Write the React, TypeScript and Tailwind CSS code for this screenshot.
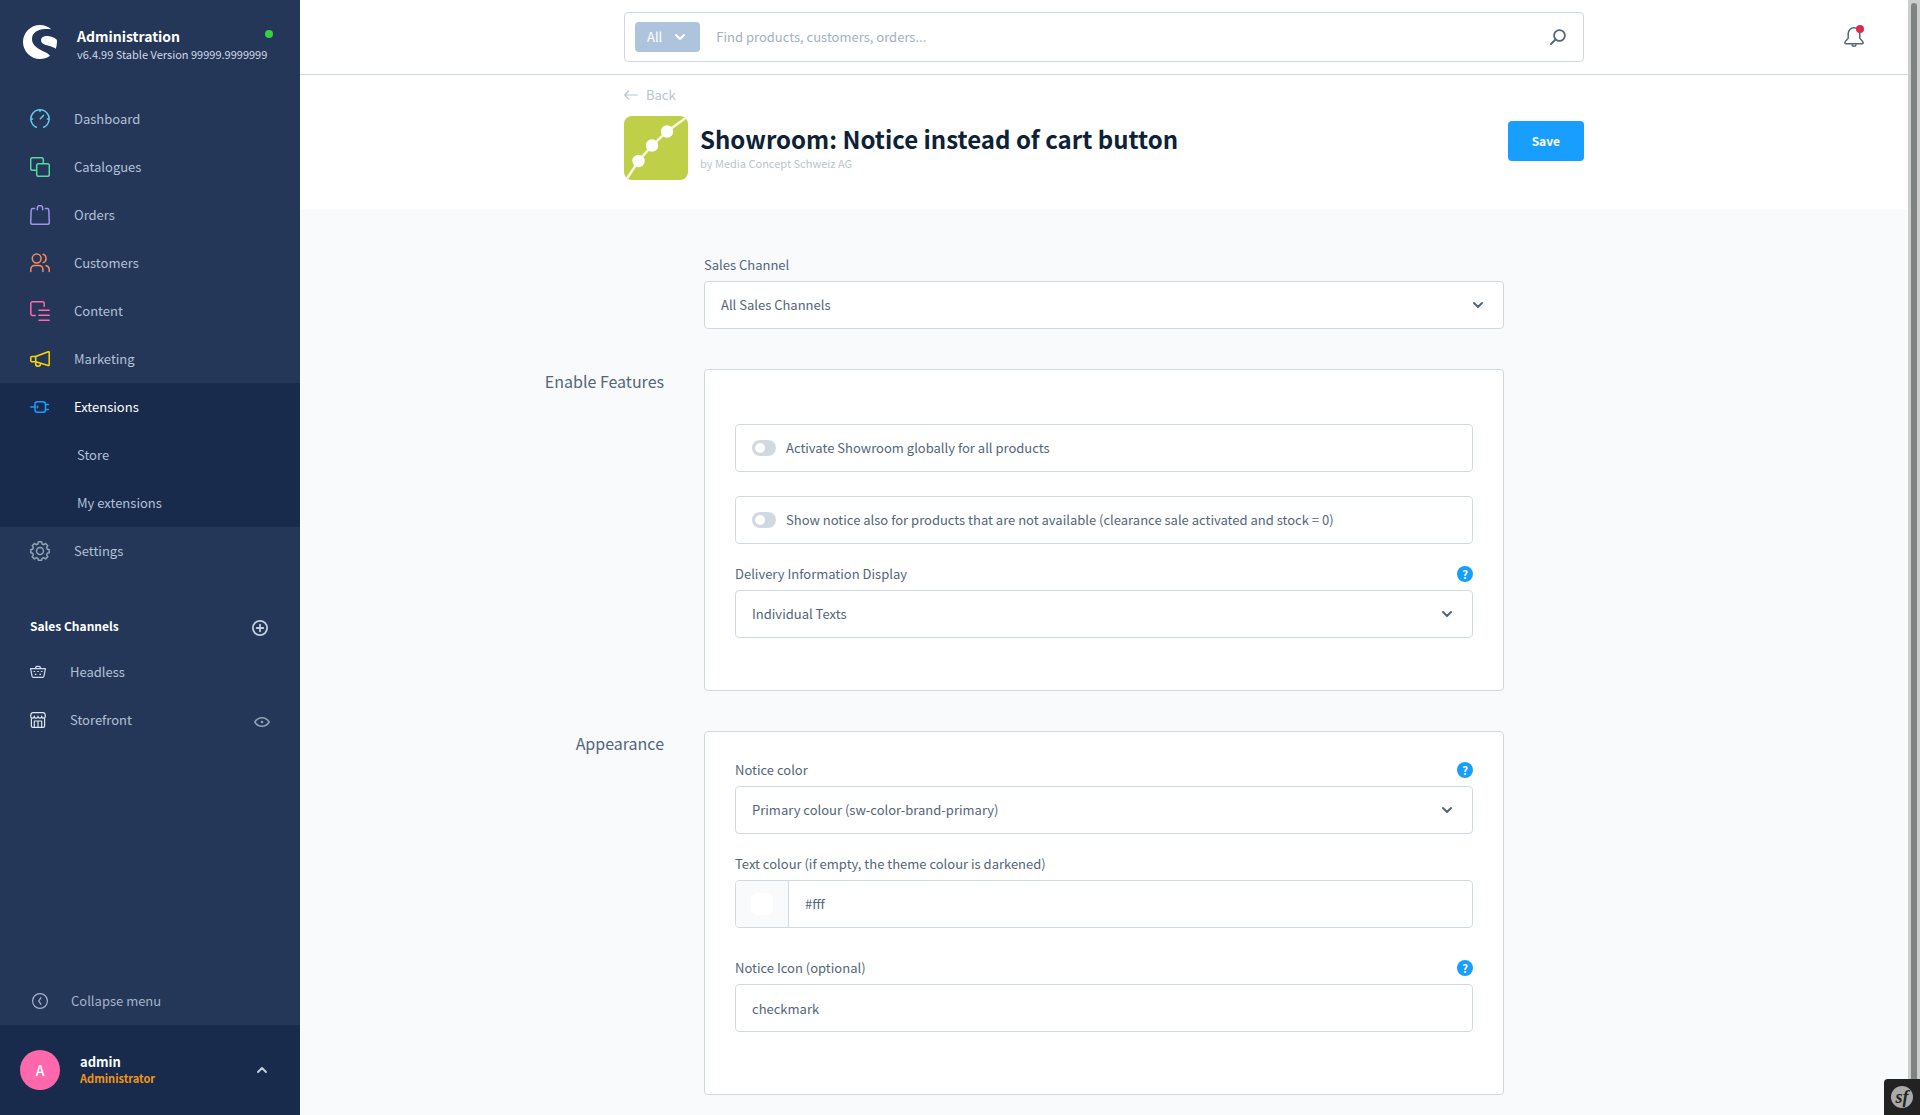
import React, { useState } from 'react';

type IconProps = { className?: string };

const DashboardIcon = () => (
    <svg width="20" height="20" viewBox="0 0 20 20" fill="none" stroke="#65CBE9" strokeWidth="1.5" strokeLinecap="round">
        <path d="M6.3 18.2A9.1 9.1 0 1 1 13.7 18.2" />
        <path d="M10 .9v1.600M.9 10h1.700M19.100 10h-1.700M10.300 9.700l3.200-3.300" />
    </svg>
);

const CataloguesIcon = () => (
    <svg width="20" height="20" viewBox="0 0 20 20" fill="none" stroke="#57D9A3" strokeWidth="1.500">
        <rect x="6.700" y="6.700" width="12.600" height="12.600" rx="1.800" />
        <path d="M6.700 13.300H2.500A1.800 1.800 0 0 1 .7 11.500V2.500A1.800 1.800 0 0 1 2.500.7h9a1.800 1.800 0 0 1 1.800 1.800v4.200" />
    </svg>
);

const OrdersIcon = () => (
    <svg width="20" height="20" viewBox="0 0 20 20" fill="none" stroke="#A092F0" strokeWidth="1.500" strokeLinecap="round">
        <path d="M4.500 3.500H2.700Q1.300 3.500 1.200 5L.7 17.500Q.7 19.300 2.400 19.300h15.200q1.700 0 1.700-1.800L18.800 5q-.1-1.500-1.500-1.500h-1.800" />
        <path d="M7.300 4.700V3.200a2.700 2.700 0 0 1 5.400 0v1.500" />
    </svg>
);

const CustomersIcon = () => (
    <svg width="20" height="20" viewBox="0 0 20 20" fill="none" stroke="#F88962" strokeWidth="1.500" strokeLinecap="round">
        <circle cx="6.700" cy="5.500" r="4.400" />
        <path d="M.8 18.500v-2.300a3.700 3.700 0 0 1 3.700-3.700h4.700a3.700 3.700 0 0 1 3.700 3.700v2.300" />
        <path d="M13.200 1.300a4.400 4.400 0 0 1 0 8.300M16 12.700a3.700 3.700 0 0 1 3.200 3.600v2.200" />
    </svg>
);

const ContentIcon = () => (
    <svg width="20" height="20" viewBox="0 0 20 20" fill="none" stroke="#FF68B4" strokeWidth="1.500" strokeLinecap="round">
        <path d="M5.200 14.400H2.500a1.700 1.700 0 0 1-1.700-1.700V2.500A1.700 1.700 0 0 1 2.500.8h10a1.700 1.700 0 0 1 1.700 1.700v2.700" />
        <path d="M9 9.300h10.200M9 14.200h10.200M9 19.200h10.200" />
    </svg>
);

const MarketingIcon = () => (
    <svg width="20" height="20" viewBox="0 0 20 20" fill="none" stroke="#FFD700" strokeWidth="1.500" strokeLinejoin="round">
        <path d="M5.700 7.500L18.200 2.700q1-.3 1 .7v12.400q0 1-1 .7L5.700 12.700z" />
        <path d="M5.700 7.500H1.800q-1 0-1 1v3.200q0 1 1 1h3.900" />
        <path d="M5.700 13v1.500a2.400 2.400 0 0 0 4.800.6v-.8" />
    </svg>
);

const ExtensionsIcon = () => (
    <svg width="20" height="20" viewBox="0 0 20 20" fill="none" stroke="#189EFF" strokeWidth="1.500" strokeLinecap="round">
        <rect x="5" y="4.800" width="10.500" height="10.500" rx="2.500" />
        <path d="M.8 10H5M15.500 7.500h2.800M15.500 12.500h2.800M7.500 9.200v1.600" />
    </svg>
);

const SettingsIcon = () => (
    <svg width="20" height="20" viewBox="0 0 20 20" fill="none" stroke="#8FA4B5" strokeWidth="1.500" strokeLinejoin="round">
        <circle cx="10" cy="10" r="3.500" />
        <path d="M8.400.8h3.200l.5 2.200 1.600.7 1.900-1.200 2.200 2.200-1.200 1.900.7 1.600 1.900.4v3.200l-1.900.4-.7 1.600 1.200 1.900-2.200 2.200-1.900-1.200-1.600.7-.5 1.800H8.400L7.900 17.400l-1.600-.7-1.900 1.200-2.200-2.200 1.200-1.900-.7-1.600-1.900-.4V8.600l1.900-.4.7-1.600-1.200-1.900 2.200-2.200 1.900 1.200L7.900 3z" />
    </svg>
);

const BasketIcon = () => (
    <svg width="16" height="16" viewBox="0 0 16 16" fill="none" stroke="#D1DBEA" strokeWidth="1.200" strokeLinejoin="round">
        <path d="M.6 4.600h14.800l-1.500 7.700q-.2 1-1.200 1H3.300q-1 0-1.200-1z" />
        <path d="M5.500 4.600q0-2.200 1.500-2.200h2q1.500 0 1.500 2.200" />
        <path d="M3.500 7.500h1.600M7.200 7.500h1.600M10.900 7.500h1.600M4.800 10.400h1.600M9.400 10.400H11" />
    </svg>
);

const StorefrontIcon = () => (
    <svg width="16" height="16" viewBox="0 0 16 16" fill="none" stroke="#E1E7F0" strokeWidth="1.200" strokeLinejoin="round">
        <path d="M1.400 6.200V14q0 1.300 1.300 1.300h10.600q1.300 0 1.300-1.300V6.200" />
        <path d="M.7 4.200Q.7.7 3 .7h10q2.300 0 2.300 3.500 0 2-1.700 2-1.900 0-1.900-2 0 2-1.850 2T8 4.200q0 2-1.850 2T4.300 4.200q0 2-1.900 2-1.700 0-1.700-2z" />
        <path d="M4.300 15.200V9h7.400v6.200M8 9v6.200" />
    </svg>
);

const Chevron = ({ className }: IconProps) => (
    <svg className={className} width="12" height="8" viewBox="0 0 12 8" fill="none" stroke="currentColor" strokeWidth="2" strokeLinecap="round" strokeLinejoin="round">
        <path d="M2 2l4 4 4-4" />
    </svg>
);

const menuTop = [
    { id: 'dashboard', label: 'Dashboard', icon: <DashboardIcon /> },
    { id: 'catalogues', label: 'Catalogues', icon: <CataloguesIcon /> },
    { id: 'orders', label: 'Orders', icon: <OrdersIcon /> },
    { id: 'customers', label: 'Customers', icon: <CustomersIcon /> },
    { id: 'content', label: 'Content', icon: <ContentIcon /> },
    { id: 'marketing', label: 'Marketing', icon: <MarketingIcon /> },
];

const MenuItem = ({ icon, label, active }: { icon: React.ReactNode; label: string; active?: boolean }) => (
    <a href="#" className={`flex h-12 items-center gap-6 px-[30px] ${active ? 'text-white' : 'text-[#B2C1D8]'}`}>
        {icon}
        {label}
    </a>
);

const Sidebar = () => (
    <aside className="flex w-[300px] shrink-0 flex-col bg-[#243758]">
        <div className="flex items-start justify-between py-6 pl-[23px] pr-[27px]">
            <div className="flex items-center gap-5">
                <svg width="34" height="34" viewBox="0 0 34 34" fill="#fff">
                    <path d="M28.300 4.300C25.500 1.600 21.400 0 17 0 7.600 0 0 7.600 0 17s7.600 17 17 17c3.600 0 7.200-1.100 10-3.300-2.300-3-6.600-4.300-10.200-6.300C12.500 22 9 19 9 14 9 8 14.500 4.300 22 4.100c2.200 0 4.300 0 6.300.2z" />
                    <path d="M33.800 14.700C31 12.400 27.200 11 23.500 11.100c-3.200 0-5.400 1.700-5.400 4.100 0 3.400 3.500 4.300 7.400 5.600 2.600.8 5.200 1.700 7.300 3 1-2.900 1.400-6 1-9.100z" />
                </svg>
                <div>
                    <p className="text-[14px] font-bold leading-6 text-white">Administration</p>
                    <p className="whitespace-nowrap text-[11px] leading-3 text-[#D1D9E5]">v6.4.99 Stable Version 99999.9999999</p>
                </div>
            </div>
            <span className="-ml-2 mt-1.5 size-2 shrink-0 rounded-full bg-[#37D046]" />
        </div>

        <nav className="mt-[11px]">
            {menuTop.map((item) => (
                <MenuItem key={item.id} icon={item.icon} label={item.label} />
            ))}
            <div className="bg-[#182B4D]">
                <MenuItem icon={<ExtensionsIcon />} label="Extensions" active />
                <a href="#" className="flex h-12 items-center pl-[77px] text-[#B2C1D8]">Store</a>
                <a href="#" className="flex h-12 items-center pl-[77px] text-[#B2C1D8]">My extensions</a>
            </div>
            <MenuItem icon={<SettingsIcon />} label="Settings" />
        </nav>

        <div className="mt-[29px] flex h-11 items-center justify-between pl-[30px] pr-8">
            <h2 className="text-[12px] font-bold text-white">Sales Channels</h2>
            <button type="button" aria-label="Add sales channel" className="pt-1">
                <svg width="16" height="16" viewBox="0 0 16 16" fill="none" stroke="#C2CEE0" strokeWidth="1.800" strokeLinecap="round">
                    <circle cx="8" cy="8" r="7.100" />
                    <path d="M8 4.700v6.600M4.700 8h6.600" />
                </svg>
            </button>
        </div>
        <a href="#" className="flex h-12 items-center gap-6 px-[30px] text-[#B2C1D8]">
            <BasketIcon />
            Headless
        </a>
        <div className="flex h-12 items-center justify-between pl-[30px] pr-[30px] text-[#B2C1D8]">
            <a href="#" className="flex items-center gap-6">
                <StorefrontIcon />
                Storefront
            </a>
            <button type="button" aria-label="Open storefront" className="pt-1">
                <svg width="16" height="16" viewBox="0 0 16 16" fill="none" stroke="#8FA4B5" strokeWidth="1.500">
                    <path d="M.8 8Q3.500 3.700 8 3.700T15.200 8Q12.500 12.300 8 12.300T.8 8z" />
                    <circle cx="8" cy="8" r="1.300" fill="#8FA4B5" stroke="none" />
                </svg>
            </button>
        </div>

        <button type="button" className="mt-auto flex h-12 items-center gap-[23px] px-8 text-[#A5B4CC]">
            <svg width="16" height="16" viewBox="0 0 16 16" fill="none" stroke="currentColor" strokeLinecap="round" strokeLinejoin="round">
                <circle cx="8" cy="8" r="7.400" strokeWidth="1.200" />
                <path d="M8.800 4.800L6.700 8l2.100 3.200" strokeWidth="1.300" />
            </svg>
            Collapse menu
        </button>
        <button type="button" className="flex h-[90px] items-center bg-[#182B4D] pl-5 pr-8 text-left">
            <span className="flex size-10 items-center justify-center rounded-full bg-[#FF68AC] text-[14px] font-medium text-white">A</span>
            <span className="ml-5 flex flex-1 flex-col font-bold leading-[17px]">
                <span className="text-white">admin</span>
                <span className="text-[11px] text-[#F19612]">Administrator</span>
            </span>
            <Chevron className="rotate-180 text-[#C2CEE0]" />
        </button>
    </aside>
);

const TopBar = () => (
    <header className="grid grid-cols-[1fr_minmax(0,960px)_1fr] items-center border-b border-[#D1D9E0] bg-white py-3">
        <div className="col-start-2 flex h-[50px] items-center rounded border border-[#D1D9E0] pl-2.5 pr-[17px]">
            <button type="button" className="flex h-[30px] items-center gap-3 rounded bg-[#AEC4DC] pl-3 pr-3.5 text-white">
                All
                <Chevron />
            </button>
            <input
                type="text"
                aria-label="Search"
                placeholder="Find products, customers, orders..."
                className="ml-4 min-w-0 flex-1 bg-transparent outline-none placeholder:text-[#A3B1BF]"
            />
            <button type="button" aria-label="Start search" className="text-[#52667A]">
                <svg width="16" height="16" viewBox="0 0 16 16" fill="none" stroke="currentColor" strokeWidth="1.800" strokeLinecap="round">
                    <circle cx="9.500" cy="6.500" r="5.400" />
                    <path d="M5.500 10.500L1 15" />
                </svg>
            </button>
        </div>
        <button type="button" aria-label="Notifications" className="relative mr-11 justify-self-end text-[#52667A]">
            <svg width="20" height="20" viewBox="0 0 20 20" fill="none" stroke="currentColor" strokeWidth="1.500" strokeLinejoin="round">
                <path d="M10 .8h0a5.800 5.800 0 0 1 5.800 5.800v4.400c0 1.300 3.400 3 3.400 4.800 0 .7-.4.900-1 .9H1.800c-.6 0-1-.2-1-.9 0-1.800 3.400-3.500 3.400-4.800V6.600A5.800 5.800 0 0 1 10 .8z" />
                <path d="M8 17.200a2 2 0 0 0 4 0" />
            </svg>
            <span className="absolute -top-0.5 right-0 size-2 rounded-full bg-[#DE294C]" />
        </button>
    </header>
);

const PageHead = () => (
    <div className="grid grid-cols-[1fr_minmax(0,960px)_1fr] bg-white pb-[29px] pt-2.5">
        <div className="col-start-2">
            <a href="#" className="inline-flex h-5 items-center gap-2 align-top text-[#B8C4D0]">
                <svg width="14" height="10" viewBox="0 0 14 10" fill="none" stroke="currentColor" strokeWidth="1.200" strokeLinecap="round" strokeLinejoin="round">
                    <path d="M13.400 5H.8M4.500 1L.8 5l3.700 4" />
                </svg>
                Back
            </a>
            <div className="mt-[11px] flex items-start">
                <svg className="rounded-lg" width="64" height="64" viewBox="0 0 64 64">
                    <rect width="64" height="64" fill="#BFD048" />
                    <path d="M2 64L14.500 45 28 29.500 43 15.500 63 1" fill="none" stroke="#F4F7DC" strokeWidth="2.500" />
                    <circle cx="14.500" cy="45" r="6.200" fill="#fff" />
                    <circle cx="28" cy="29.500" r="6.200" fill="#fff" />
                    <circle cx="43" cy="15.500" r="6.200" fill="#fff" />
                </svg>
                <div className="ml-3 mt-1.5 flex-1">
                    <h1 className="text-[24px] font-bold leading-[34px] text-[#0D2137]">Showroom: Notice instead of cart button</h1>
                    <p className="text-[11px] leading-[14px] text-[#B8C4D0]">by Media Concept Schweiz AG</p>
                </div>
                <button type="button" className="mt-[5px] h-10 rounded bg-[#189EFF] px-6 text-[12px] font-bold text-white">Save</button>
            </div>
        </div>
    </div>
);

const HelpButton = () => (
    <button type="button" aria-label="Help" className="flex size-4 items-center justify-center rounded-full bg-[#189EFF] text-[11px] font-bold leading-none text-white">
        ?
    </button>
);

type FieldProps = { id: string; label: string; help?: boolean; className?: string; children: React.ReactNode };

const Field = ({ id, label, help, className, children }: FieldProps) => (
    <div className={className}>
        <div className="mb-2 flex h-4 items-center justify-between">
            <label htmlFor={id}>{label}</label>
            {help && <HelpButton />}
        </div>
        {children}
    </div>
);

const SelectBox = ({ id, options }: { id: string; options: string[] }) => (
    <div className="relative">
        <select id={id} className="h-12 w-full appearance-none rounded border border-[#D1D9E0] bg-white px-4">
            {options.map((option) => (
                <option key={option}>{option}</option>
            ))}
        </select>
        <Chevron className="pointer-events-none absolute right-5 top-5" />
    </div>
);

const SwitchBox = ({ label }: { label: string }) => {
    const [checked, setChecked] = useState(false);

    return (
        <label className="mb-6 flex h-12 items-center gap-2.5 rounded border border-[#D1D9E0] px-4">
            <input
                type="checkbox"
                role="switch"
                checked={checked}
                onChange={(e) => setChecked(e.target.checked)}
                className="flex h-4 w-6 appearance-none items-center rounded-full bg-[#D1D9E0] px-[3px] before:size-2.5 before:rounded-full before:bg-white before:content-[''] checked:justify-end checked:bg-[#189EFF]"
            />
            {label}
        </label>
    );
};

const Card = ({ title, children }: { title: string; children: React.ReactNode }) => (
    <>
        <h2 className="text-right text-[16px] leading-6">{title}</h2>
        <section className="rounded border border-[#D1D9E0] bg-white p-[30px]">{children}</section>
        <span />
    </>
);

export default function App() {
    const [color, setColor] = useState('#fff');
    const [icon, setIcon] = useState('checkmark');

    return (
        <div className="flex h-screen overflow-hidden font-['Noto_Sans_CJK_SC','Open_Sans',sans-serif] text-[13px] text-[#52667A]">
            <Sidebar />
            <div className="flex min-w-0 flex-1 flex-col">
                <TopBar />
                <PageHead />
                <main className="grid min-h-0 flex-1 grid-cols-[1fr_minmax(0,800px)_1fr] content-start gap-10 overflow-hidden bg-[#F9FAFC] pt-12">
                    <Field id="sales-channel" label="Sales Channel" className="col-start-2">
                        <SelectBox id="sales-channel" options={['All Sales Channels', 'Headless', 'Storefront']} />
                    </Field>
                    <span />

                    <Card title="Enable Features">
                        <div className="pt-6">
                            <SwitchBox label="Activate Showroom globally for all products" />
                            <SwitchBox label="Show notice also for products that are not available (clearance sale activated and stock = 0)" />
                        </div>
                        <Field id="delivery" label="Delivery Information Display" help className="-mt-0.5 mb-[22px]">
                            <SelectBox id="delivery" options={['Individual Texts']} />
                        </Field>
                    </Card>

                    <Card title="Appearance">
                        <Field id="notice-color" label="Notice color" help className="mb-[22px]">
                            <SelectBox id="notice-color" options={['Primary colour (sw-color-brand-primary)']} />
                        </Field>
                        <Field id="text-color" label="Text colour (if empty, the theme colour is darkened)" className="mb-8">
                            <div className="flex h-12 overflow-hidden rounded border border-[#D1D9E0]">
                                <button type="button" aria-label="Pick colour" className="flex w-[53px] items-center justify-center border-r border-[#D1D9E0] bg-[#F9FAFB]">
                                    <span className="size-[22px] rounded-md bg-white" />
                                </button>
                                <input id="text-color" type="text" value={color} onChange={(e) => setColor(e.target.value)} className="min-w-0 flex-1 px-4 outline-none" />
                            </div>
                        </Field>
                        <Field id="notice-icon" label="Notice Icon (optional)" help className="mb-8">
                            <input
                                id="notice-icon"
                                type="text"
                                value={icon}
                                onChange={(e) => setIcon(e.target.value)}
                                className="h-12 w-full rounded border border-[#D1D9E0] px-4 outline-none"
                            />
                        </Field>
                    </Card>
                </main>
            </div>

            {/* Scrollbar track */}
            <div className="w-3 shrink-0 bg-[#CDCDCD] px-[3px] pt-[3px]">
                <div className="h-full rounded-t-full bg-[#7F8482]" />
            </div>

            {/* Symfony toolbar toggle */}
            <button type="button" aria-label="Show toolbar" className="fixed bottom-0 right-0 flex size-9 items-center justify-center rounded-tl bg-[#222]">
                <span className="flex size-[22px] items-center justify-center rounded-full bg-[#AAA] font-['Liberation_Serif',serif] text-[18px] font-bold italic leading-none text-[#222]">
                    sf
                </span>
            </button>
        </div>
    );
}
